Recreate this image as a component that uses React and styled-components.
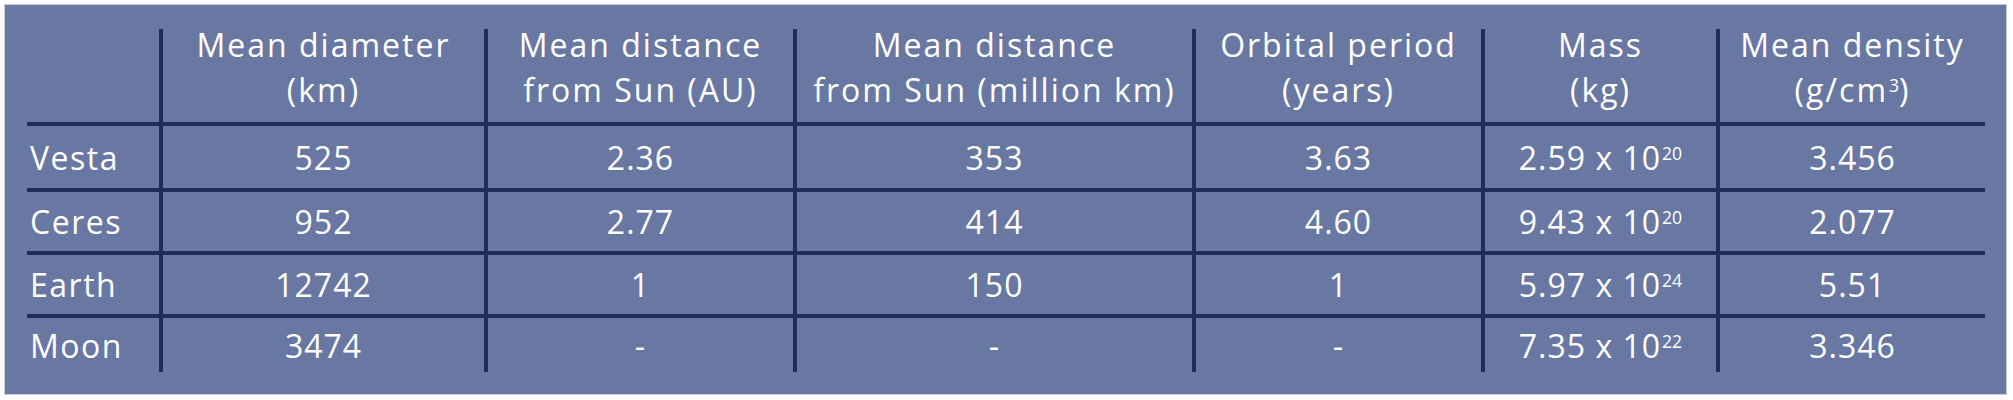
import React from "react";
import styled, { createGlobalStyle } from "styled-components";

const Global = createGlobalStyle`
  html, body { margin: 0; padding: 0; background: #ffffff; }
  body { font-family: "Open Sans", "Lato", "DejaVu Sans", sans-serif; }
`;

const LINE = "#1f2c5b";

const Page = styled.div`
  padding: 4px;
  width: 2013px;
  box-sizing: border-box;
`;

const Panel = styled.div`
  box-sizing: border-box;
  width: 2003px;
  height: 391px;
  border: 1px solid #c9ccd4;
  background: #6977a3;
  padding: 24px 0 0 22px;
`;

const Table = styled.div`
  display: grid;
  grid-template-columns: 132px 325px 309px 399px 289px 235px 269px;
  grid-template-rows: 97px 66px 63px 63px 54px;
  color: #ffffff;
  font-size: 32px;
  font-weight: 400;
`;

const Cell = styled.div`
  box-sizing: border-box;
  display: flex;
  align-items: ${(p) => (p.$head ? "flex-start" : "center")};
  justify-content: ${(p) => (p.$label ? "flex-start" : "center")};
  padding-left: ${(p) => (p.$label ? "3px" : "0")};
  border-left: ${(p) => (p.$first ? "none" : `4px solid ${LINE}`)};
  border-bottom: ${(p) => (p.$last ? "none" : `4px solid ${LINE}`)};
  white-space: nowrap;
  letter-spacing: ${(p) => (p.$head ? "2px" : p.$label ? "1.5px" : "1px")};
`;

const HeadText = styled.div`
  text-align: center;
  line-height: 45px;
  margin-top: -7px;
`;

const Sup = styled.span`
  font-size: 0.55em;
  vertical-align: baseline;
  position: relative;
  top: -0.55em;
  letter-spacing: 0;
  margin-left: 1px;
`;

const headers = [
  null,
  ["Mean diameter", "(km)"],
  ["Mean distance", "from Sun (AU)"],
  ["Mean distance", "from Sun (million km)"],
  ["Orbital period", "(years)"],
  ["Mass", "(kg)"],
  ["Mean density", <>(g/cm<Sup>3</Sup>)</>],
];

const rows = [
  ["Vesta", "525", "2.36", "353", "3.63", ["2.59", "20"], "3.456"],
  ["Ceres", "952", "2.77", "414", "4.60", ["9.43", "20"], "2.077"],
  ["Earth", "12742", "1", "150", "1", ["5.97", "24"], "5.51"],
  ["Moon", "3474", "-", "-", "-", ["7.35", "22"], "3.346"],
];

export default function App() {
  return (
    <Page>
      <Global />
      <Panel>
        <Table>
          {headers.map((h, i) => (
            <Cell key={`h${i}`} $head $first={i === 0}>
              {h && (
                <HeadText>
                  {h[0]}
                  <br />
                  {h[1]}
                </HeadText>
              )}
            </Cell>
          ))}
          {rows.map((r, ri) =>
            r.map((v, ci) => (
              <Cell
                key={`${ri}-${ci}`}
                $first={ci === 0}
                $label={ci === 0}
                $last={ri === rows.length - 1}
              >
                {Array.isArray(v) ? (
                  <span>
                    {v[0]} x 10<Sup>{v[1]}</Sup>
                  </span>
                ) : (
                  v
                )}
              </Cell>
            ))
          )}
        </Table>
      </Panel>
    </Page>
  );
}
